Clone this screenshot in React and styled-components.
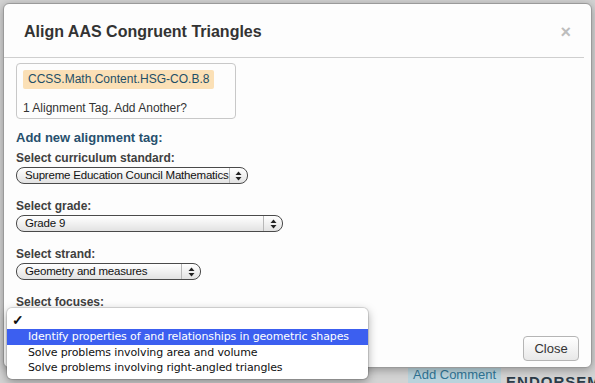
import React from "react";
import styled, { createGlobalStyle } from "styled-components";

const GlobalStyle = createGlobalStyle`
  html, body {
    margin: 0;
    padding: 0;
    background: #d3d3d3;
    font-family: "Liberation Sans", Arial, sans-serif;
  }
`;

const focuses = [
  "Identify properties of and relationships in geometric shapes",
  "Solve problems involving area and volume",
  "Solve problems involving right-angled triangles",
];

const App = () => {
  return (
    <>
      <GlobalStyle />
      <Page>
        <Backdrop>
          <FooterStrip>
            <CommentLink>Add Comment</CommentLink>
            <Endorse>ENDORSEM</Endorse>
          </FooterStrip>
        </Backdrop>

        <Modal>
          <Header>
            <Title>Align AAS Congruent Triangles</Title>
            <Dismiss>×</Dismiss>
          </Header>

          <Body>
            <TagBox>
              <Tag>CCSS.Math.Content.HSG-CO.B.8</Tag>
              <TagCount>1 Alignment Tag. Add Another?</TagCount>
            </TagBox>

            <Heading>Add new alignment tag:</Heading>

            <Field>
              <Label>Select curriculum standard:</Label>
              <MacSelect width={232}>
                <SelectText>Supreme Education Council Mathematics</SelectText>
                <Arrows />
              </MacSelect>
            </Field>

            <Field>
              <Label>Select grade:</Label>
              <MacSelect width={267}>
                <SelectText>Grade 9</SelectText>
                <Arrows />
              </MacSelect>
            </Field>

            <Field>
              <Label>Select strand:</Label>
              <MacSelect width={185}>
                <SelectText>Geometry and measures</SelectText>
                <Arrows />
              </MacSelect>
            </Field>

            <Field>
              <Label>Select focuses:</Label>
              <FocusAnchor>
                <Menu>
                  <CheckRow>
                    <Check>✓</Check>
                  </CheckRow>
                  {focuses.map((f, i) => (
                    <MenuItem key={f} active={i === 0}>
                      {f}
                    </MenuItem>
                  ))}
                </Menu>
              </FocusAnchor>
            </Field>
          </Body>

          <Footer>
            <CloseButton>Close</CloseButton>
          </Footer>
        </Modal>
      </Page>
    </>
  );
};

const Arrows = () => (
  <ArrowWrap>
    <svg width="7" height="10" viewBox="0 0 7 10">
      <path d="M3.5 0.5 L6.5 4 L0.5 4 Z" fill="#222" />
      <path d="M3.5 9.5 L6.5 6 L0.5 6 Z" fill="#222" />
    </svg>
  </ArrowWrap>
);

const Page = styled.div`
  position: relative;
  width: 595px;
  height: 383px;
  overflow: hidden;
  background: #d3d3d3;
`;

const Backdrop = styled.div`
  height: 100%;
  display: flex;
  flex-direction: column;
  justify-content: flex-end;
`;

const FooterStrip = styled.div`
  display: flex;
  align-items: flex-start;
  gap: 5px;
  height: 16px;
  padding-left: 408px;
`;

const CommentLink = styled.div`
  background: #b9d3dc;
  color: #2f7596;
  font-size: 13px;
  line-height: 16px;
  padding: 0 5px;
  height: 17px;
  white-space: nowrap;
`;

const Endorse = styled.div`
  margin-top: 6px;
  font-weight: 700;
  font-size: 15px;
  line-height: 17px;
  letter-spacing: 1px;
  color: #2c3b48;
  white-space: nowrap;
`;

const Modal = styled.div`
  position: absolute;
  left: 3px;
  top: 3px;
  width: 587px;
  height: 363px;
  background: #fdfdfd;
  border: 1px solid #9a9a9a;
  border-radius: 6px;
  box-shadow: 0 2px 8px rgba(0, 0, 0, 0.3);
  display: flex;
  flex-direction: column;
`;

const Header = styled.div`
  flex-shrink: 0;
  border-bottom: 1px solid #cfcfcf;
  display: flex;
  align-items: center;
  justify-content: space-between;
  padding: 2px 13px 0 20px;
  box-sizing: border-box;
  height: 54px;
  margin-right: 7px;
`;

const Title = styled.h3`
  margin: 0;
  font-size: 16px;
  font-weight: 700;
  color: #333;
`;

const Dismiss = styled.span`
  font-size: 18px;
  font-weight: 700;
  color: #bdbdbd;
  line-height: 1;
`;

const Body = styled.div`
  flex: 1;
  min-height: 0;
  padding: 5px 12px 0;
`;

const TagBox = styled.div`
  width: 206px;
  height: 43px;
  padding: 5px 6px 6px;
  border: 1px solid #c8c8c8;
  border-radius: 4px;
`;

const Tag = styled.span`
  display: inline-block;
  background: #fbe0b6;
  color: #1e4f66;
  font-size: 12px;
  line-height: 19px;
  padding: 0 5px;
  border-radius: 2px;
`;

const TagCount = styled.div`
  margin-top: 12px;
  font-size: 12px;
  color: #333;
`;

const Heading = styled.div`
  margin-top: 11px;
  font-size: 13px;
  line-height: 15px;
  font-weight: 700;
  color: #27506d;
`;

const Field = styled.div`
  margin-top: 6px;
  margin-bottom: 15px;
  & + & {
    margin-top: 0;
  }
`;

const Label = styled.div`
  font-size: 12px;
  font-weight: 700;
  color: #404040;
  line-height: 14px;
  margin-bottom: 2px;
`;

const MacSelect = styled.div`
  width: ${(p) => p.width}px;
  height: 17px;
  box-sizing: border-box;
  border: 1px solid #4a4a4a;
  border-radius: 8px;
  background: linear-gradient(#ffffff, #f1f1f1 50%, #e2e2e2);
  display: flex;
  align-items: center;
  justify-content: space-between;
  padding-left: 8px;
`;

const SelectText = styled.span`
  font-size: 11.5px;
  letter-spacing: -0.2px;
  line-height: 15px;
  color: #111;
  white-space: nowrap;
`;

const ArrowWrap = styled.span`
  flex-shrink: 0;
  height: 100%;
  width: 18px;
  display: flex;
  align-items: center;
  justify-content: center;
  border-left: 1px solid #b8b8b8;
`;

const FocusAnchor = styled.div`
  position: relative;
  height: 17px;
`;

const Menu = styled.div`
  position: absolute;
  left: -9px;
  top: -3px;
  width: 361px;
  padding: 2px 0 4px;
  background: #fff;
  border-radius: 5px;
  box-shadow: 0 3px 10px rgba(0, 0, 0, 0.35), 0 0 0 1px rgba(0, 0, 0, 0.12);
`;

const MenuItem = styled.div`
  height: ${(p) => (p.active ? 16 : 15)}px;
  line-height: ${(p) => (p.active ? 16 : 15)}px;
  padding-left: 21px;
  font-family: "DejaVu Sans", sans-serif;
  font-size: 11px;
  letter-spacing: -0.13px;
  white-space: nowrap;
  color: ${(p) => (p.active ? "#fff" : "#111")};
  background: ${(p) => (p.active ? "#3c5ff0" : "transparent")};
`;

const CheckRow = styled.div`
  height: 19px;
  line-height: 20px;
  padding-left: 5px;
`;

const Check = styled.span`
  font-size: 14px;
  font-weight: 700;
  color: #111;
`;

const Footer = styled.div`
  flex-shrink: 0;
  display: flex;
  justify-content: flex-end;
  padding: 0 12px 6px;
`;

const CloseButton = styled.button`
  width: 56px;
  height: 25px;
  border: 1px solid #b5b5b5;
  border-radius: 4px;
  background: linear-gradient(#ffffff, #e8e8e8);
  font-family: "Liberation Sans", Arial, sans-serif;
  font-size: 13px;
  color: #333;
  padding: 0;
`;

export default App;
